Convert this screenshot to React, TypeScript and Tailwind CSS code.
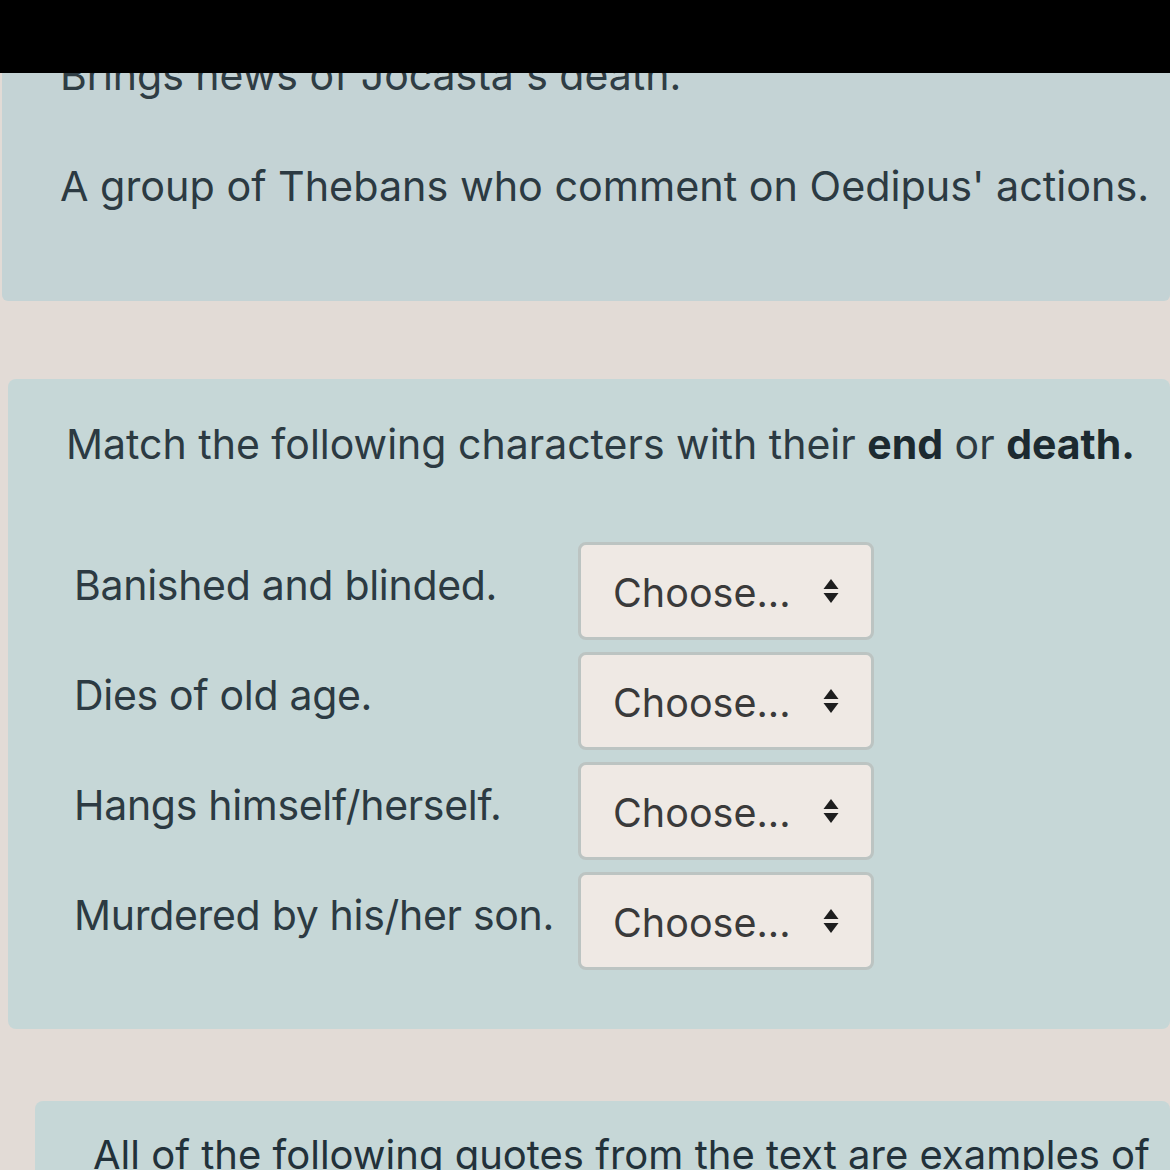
import React from "react";

const rows = [
  "Banished and blinded.",
  "Dies of old age.",
  "Hangs himself/herself.",
  "Murdered by his/her son.",
];

function Arrows() {
  return (
    <svg width="18" height="28" viewBox="0 0 18 28" className="shrink-0">
      <path d="M9 2 L16.5 12 L1.5 12 Z" fill="#1e1e1e" />
      <path d="M9 26 L16.5 16 L1.5 16 Z" fill="#1e1e1e" />
    </svg>
  );
}

export default function App() {
  return (
    <div
      className="w-[1170px] h-[1170px] overflow-hidden bg-[#e2dbd6] text-[#2a3a40]"
      style={{ fontFamily: 'Inter, "Liberation Sans", Arial, sans-serif' }}
    >
      <div className="h-[73px] bg-black" />
      <div className="ml-[2px] h-[228px] overflow-hidden rounded-b-[6px] bg-[#c4d3d5] pl-[58px]">
        <div className="-mt-[22px] text-[41px] leading-[48px] text-[#2f3d44]">
          Brings news of Jocasta's death.
        </div>
        <div className="mt-[62px] text-[41.3px] leading-[50px] text-[#2c3a42]">
          A group of Thebans who comment on Oedipus' actions.
        </div>
      </div>
      <div className="h-[78px]" />
      <div className="ml-[8px] h-[650px] rounded-[8px] bg-[#c6d7d7] pl-[58px] pt-[40px]">
        <div className="text-[41px] leading-[50px] text-[#2c3a42]">
          Match the following characters with their <b className="text-[#1c2a30]">end</b> or{" "}
          <b className="text-[#1c2a30]">death.</b>
        </div>
        <div className="mt-[73px] flex flex-col gap-[12px]">
          {rows.map((r) => (
            <div key={r} className="flex items-start">
              <div className="w-[512px] pl-[8px] pt-[20px] text-[41px] leading-[46px] tracking-[-0.3px] text-[#2c3a42]">
                {r}
              </div>
              <div className="flex h-[98px] w-[296px] items-center justify-between rounded-[8px] border-[3px] border-[#bcc4c2] bg-[#efe9e4] pl-[32px] pr-[31px]">
                <span className="pt-[6px] text-[39.5px] text-[#3a3a3a]">Choose...</span>
                <Arrows />
              </div>
            </div>
          ))}
        </div>
      </div>
      <div className="h-[72px]" />
      <div className="ml-[35px] h-[200px] rounded-[8px] bg-[#c6d7d7] pl-[58px] pt-[30px]">
        <div className="text-[40px] leading-[48px] text-[#22313a]">
          All of the following quotes from the text are examples of
        </div>
      </div>
    </div>
  );
}
